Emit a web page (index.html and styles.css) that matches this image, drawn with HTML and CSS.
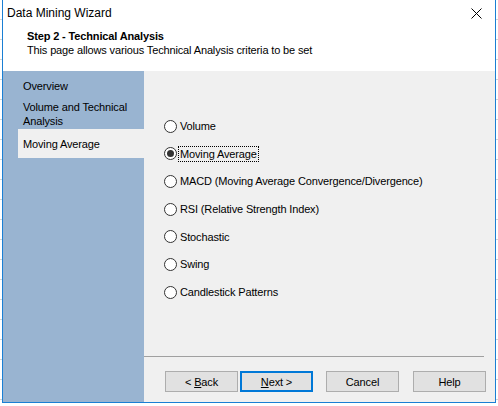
FILE: index.html
```html
<!DOCTYPE html>
<html lang="en">
<head>
    <meta charset="UTF-8">
    <title>Data Mining Wizard</title>
    <link rel="stylesheet" href="styles.css">
</head>
<body>
    <div class="window">
        <div class="titlebar">
            <span class="title">Data Mining Wizard</span>
            <svg class="close" width="11" height="11" viewBox="0 0 11 11">
                <path d="M0.5 0.5 L10.5 10.5 M10.5 0.5 L0.5 10.5" stroke="#000" stroke-width="1"/>
            </svg>
        </div>
        <div class="header">
            <div class="step">Step 2 - Technical Analysis</div>
            <div class="subtitle">This page allows various Technical Analysis criteria to be set</div>
        </div>
        <div class="main">
            <div class="nav">
                <div class="nav-item first">Overview</div>
                <div class="nav-item">Volume and Technical<br>Analysis</div>
                <div class="nav-item active">Moving Average</div>
            </div>
            <div class="content">
                <div class="options">
                    <label class="option"><span class="radio"></span><span class="text">Volume</span></label>
                    <label class="option"><span class="radio checked"></span><span class="text focus">Moving Average</span></label>
                    <label class="option"><span class="radio"></span><span class="text">MACD (Moving Average Convergence/Divergence)</span></label>
                    <label class="option"><span class="radio"></span><span class="text">RSI (Relative Strength Index)</span></label>
                    <label class="option"><span class="radio"></span><span class="text">Stochastic</span></label>
                    <label class="option"><span class="radio"></span><span class="text">Swing</span></label>
                    <label class="option"><span class="radio"></span><span class="text">Candlestick Patterns</span></label>
                </div>
                <div class="separator"></div>
                <div class="buttons">
                    <button>&lt; <u>B</u>ack</button>
                    <button class="default"><u>N</u>ext &gt;</button>
                    <button class="spaced">Cancel</button>
                    <button class="spaced">Help</button>
                </div>
            </div>
        </div>
    </div>
</body>
</html>
```

FILE: styles.css
```css
body {
    margin: 0;
    width: 498px;
    height: 406px;
    overflow: hidden;
    font-family: 'Liberation Sans', Arial, sans-serif;
    font-size: 11px;
    letter-spacing: -0.14px;
    color: #000;
    background: #fff repeating-linear-gradient(to bottom, transparent 0, transparent 19px, #d4d4d4 19px, #d4d4d4 20px);
}
.window {
    margin-left: 2px;
    width: 492px;
    height: 402px;
    border: 1px solid #1a7fd4;
    border-top: none;
    background: #fff;
    display: flex;
    flex-direction: column;
}
.titlebar {
    height: 26px;
    display: flex;
    align-items: center;
    justify-content: space-between;
    padding: 0 13px 0 4px;
}
.title {
    font-size: 12px;
    letter-spacing: 0;
}
.header {
    height: 45px;
    padding: 3px 0 0 24px;
    box-sizing: border-box;
    line-height: 14px;
}
.step {
    font-weight: bold;
}
.main {
    flex: 1;
    display: flex;
}
.nav {
    width: 141px;
    background: #99b4d1;
    padding-top: 8px;
    line-height: 14px;
}
.nav-item {
    margin-left: 15px;
    padding-left: 5px;
}
.nav-item.first {
    margin-bottom: 7px;
}
.nav-item.active {
    margin-top: 1px;
    padding-top: 8px;
    padding-bottom: 7px;
    background: #f0f0f0;
}
.content {
    flex: 1;
    background: #f0f0f0;
    display: flex;
    flex-direction: column;
}
.options {
    padding: 48px 0 0 20px;
    display: flex;
    flex-direction: column;
    gap: 13.7px;
    height: 237px;
}
.option {
    display: flex;
    align-items: center;
    height: 14px;
}
.radio {
    width: 11px;
    height: 11px;
    border: 1px solid #333;
    border-radius: 50%;
    background: #fff;
    display: flex;
    align-items: center;
    justify-content: center;
    margin-right: 1px;
}
.radio.checked::after {
    content: "";
    width: 7px;
    height: 7px;
    border-radius: 50%;
    background: #333;
}
.text {
    padding: 1px 1px;
    border: 1px dotted transparent;
}
.text.focus {
    border-color: #000;
}
.separator {
    height: 1px;
    background: #a0a0a0;
    margin-right: 11px;
}
.buttons {
    display: flex;
    padding: 14px 0 0 21px;
}
.buttons button {
    width: 73px;
    height: 21px;
    background: #e1e1e1;
    border: 1px solid #adadad;
    font-family: inherit;
    font-size: 11px;
    letter-spacing: -0.14px;
    color: #000;
    padding: 0;
    margin-right: 2px;
}
.buttons button.default {
    border: 2px solid #0078d7;
}
.buttons button.spaced {
    margin-left: 11px;
}
.buttons button.spaced:last-child {
    margin-left: 12px;
}
```
